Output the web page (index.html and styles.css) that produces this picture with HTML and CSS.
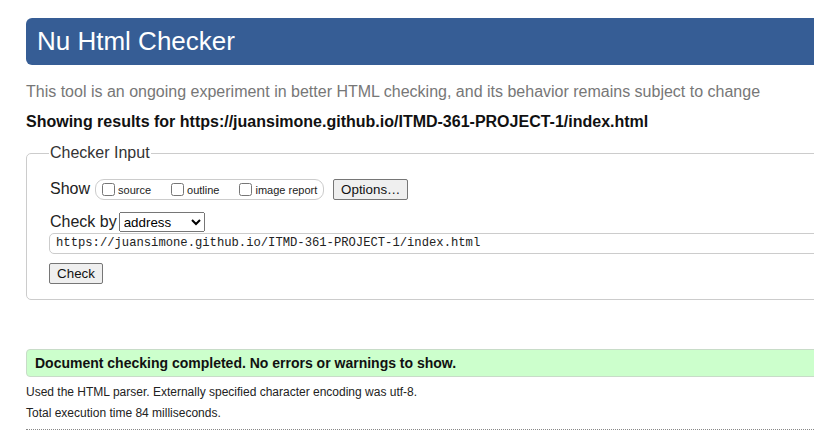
FILE: index.html
```html
<!DOCTYPE html>
<html lang="en">
<head>
<meta charset="utf-8">
<title>Nu Html Checker</title>
<link rel="stylesheet" href="styles.css">
</head>
<body>
<div class="page">
  <h1 class="title">Nu Html Checker</h1>
  <p class="intro">This tool is an ongoing experiment in better HTML checking, and its behavior remains subject to change</p>
  <p class="showing">Showing results for https://juansimone.github.io/ITMD-361-PROJECT-1/index.html</p>
  <fieldset class="input-box">
    <legend class="legend">Checker Input</legend>
    <div class="row">
      <span class="lbl">Show</span>
      <span class="opts">
        <label class="opt"><input type="checkbox" class="cb"><span>source</span></label>
        <label class="opt"><input type="checkbox" class="cb"><span>outline</span></label>
        <label class="opt"><input type="checkbox" class="cb"><span>image report</span></label>
      </span>
      <button class="btn btn-options" type="button">Options…</button>
    </div>
    <div class="row row-by">
      <span class="lbl">Check by</span>
      <select class="sel"><option>address</option></select>
    </div>
    <div class="url">https://juansimone.github.io/ITMD-361-PROJECT-1/index.html</div>
    <button class="btn btn-check" type="button">Check</button>
  </fieldset>
  <p class="success">Document checking completed. No errors or warnings to show.</p>
  <p class="details">Used the HTML parser. Externally specified character encoding was utf-8.</p>
  <p class="details">Total execution time 84 milliseconds.</p>
  <hr class="sep">
</div>
</body>
</html>
```
FILE: styles.css
```css
html { overflow: hidden; }
body {
  margin: 0;
  font-family: "Liberation Sans", Arial, sans-serif;
  color: #222;
  background: #fff;
}
.page {
  width: 1000px;
  padding: 18px 0 0 26px;
}
.title {
  margin: 0;
  height: 47px;
  line-height: 47px;
  padding-left: 11px;
  background: #365d95;
  color: #fff;
  font-size: 26px;
  font-weight: normal;
  border-radius: 6px;
}
.intro {
  margin: 17px 0 0 0;
  font-size: 16px;
  line-height: 20px;
  color: #777;
}
.showing {
  margin: 10px 0 0 0;
  font-size: 16px;
  line-height: 20px;
  font-weight: bold;
  color: #111;
}
.input-box {
  margin: 12px 0 0 0;
  padding: 10px 22px 15px 22px;
  border: 1px solid #ccc;
  border-radius: 5px;
  min-width: 0;
}
.legend {
  font-size: 16px;
  color: #333;
  padding: 0 1px;
}
.row {
  display: flex;
  align-items: center;
  height: 22px;
  margin-top: 6px;
}
.row-by { margin-top: 11px; }
.lbl {
  font-size: 16px;
  color: #222;
  margin-right: 5px;
}
.lbl:first-child { margin-left: 1px; }
.opts {
  display: flex;
  align-items: center;
  height: 19px;
  border: 1px solid #ccc;
  border-radius: 9px;
  padding: 0 6px 0 6px;
}
.opt {
  display: flex;
  align-items: center;
  font-size: 11px;
  margin-right: 20px;
}
.opt span { padding-top: 2px; }
.opt:last-child { margin-right: 0; }
.cb {
  width: 13px;
  height: 13px;
  margin: 0 3px 0 0;
}
.btn {
  font-family: "Liberation Sans", Arial, sans-serif;
  font-size: 13.33px;
  background: #efefef;
  border: 1px solid #767676;
  border-radius: 2px;
  color: #111;
  padding: 1px 6px;
  height: 21px;
}
.btn-options {
  margin-left: 9px;
  width: 75px;
}
.sel {
  font-family: "Liberation Sans", Arial, sans-serif;
  font-size: 13.33px;
  width: 86px;
  height: 20px;
  margin-left: -3px;
}
.url {
  margin-top: 0;
  height: 19px;
  line-height: 19px;
  border: 1px solid #ccc;
  border-radius: 5px;
  padding-left: 6px;
  font-family: "Liberation Mono", "DejaVu Sans Mono", monospace;
  font-size: 12.2px;
  color: #222;
}
.btn-check {
  display: block;
  margin-top: 9px;
  width: 54px;
}
.success {
  margin: 49px 0 0 0;
  height: 26px;
  line-height: 26px;
  background: #ccffcc;
  border: 1px solid #c8dcc8;
  border-radius: 4px;
  padding-left: 8px;
  font-weight: bold;
  font-size: 14px;
  color: #111;
}
.details {
  margin: 8px 0 0 0;
  font-size: 12px;
  line-height: 15px;
  color: #222;
}
.details + .details { margin-top: 6px; }
.sep {
  margin: 8px 0 0 0;
  border: 0;
  border-top: 1px dotted #888;
}
```
